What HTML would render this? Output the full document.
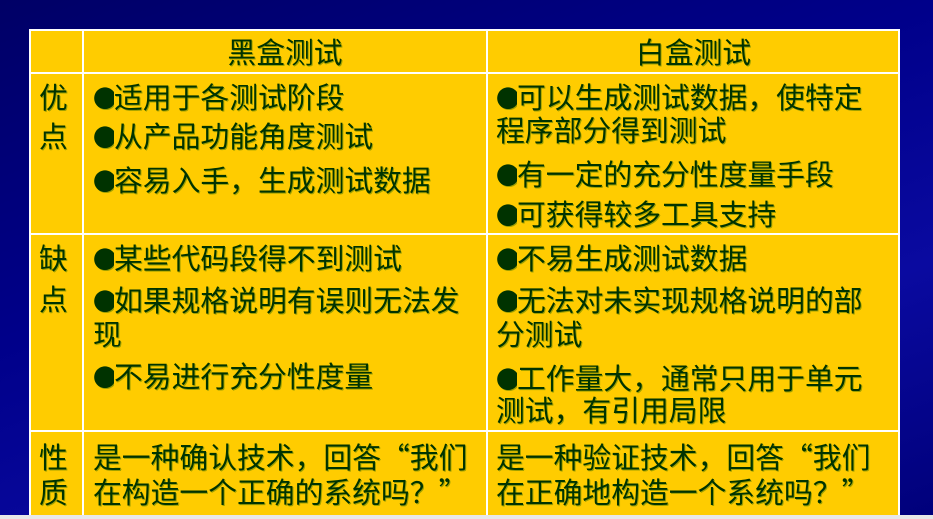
<!DOCTYPE html>
<html><head><meta charset="utf-8"><style>
html,body{margin:0;padding:0}
body{width:933px;height:519px;overflow:hidden;position:relative;
background:linear-gradient(160deg,#000066 0%,#00008a 40%,#0a0aa0 70%,#00007a 100%);
font-family:"Noto Sans CJK SC",sans-serif;}
#bot{position:absolute;left:0;top:515px;width:933px;height:4px;background:#e8e8e8}
#tbl{position:absolute;left:29px;top:29px;width:871px;height:486px;background:#ffcc00;border-top:2px solid #fff;border-left:2px solid #fff;border-right:2px solid #fff;box-sizing:border-box}
.h{position:absolute;background:#fff;height:2px;left:29px;width:871px}
.v{position:absolute;background:#fff;width:2px}
.t{position:absolute;font-size:28.8px;line-height:34px;height:34px;color:#003300;white-space:nowrap;
text-shadow:1px 1px 0 #a0a000}
.c{text-align:center}
.b{display:inline-block;width:21px;font-size:24px;vertical-align:top;overflow:hidden}
</style></head><body>
<div id="tbl"></div>
<div class="h" style="top:72px"></div>
<div class="h" style="top:233px"></div>
<div class="h" style="top:430px"></div>
<div class="v" style="left:82px;top:29px;height:486px"></div>
<div class="v" style="left:486px;top:29px;height:486px"></div>
<div id="bot"></div>

<div class="t c" style="left:84px;width:402px;top:35px">黑盒测试</div>
<div class="t c" style="left:488px;width:411px;top:35px">白盒测试</div>

<div class="t" style="left:39px;top:80px">优</div>
<div class="t" style="left:39px;top:119px">点</div>
<div class="t" style="left:93px;top:80px"><span class="b">●</span>适用于各测试阶段</div>
<div class="t" style="left:93px;top:119px"><span class="b">●</span>从产品功能角度测试</div>
<div class="t" style="left:93px;top:163px"><span class="b">●</span>容易入手，生成测试数据</div>
<div class="t" style="left:496px;top:80px"><span class="b">●</span>可以生成测试数据，使特定</div>
<div class="t" style="left:496px;top:113px">程序部分得到测试</div>
<div class="t" style="left:496px;top:157px"><span class="b">●</span>有一定的充分性度量手段</div>
<div class="t" style="left:496px;top:197px"><span class="b">●</span>可获得较多工具支持</div>

<div class="t" style="left:39px;top:241px">缺</div>
<div class="t" style="left:39px;top:282px">点</div>
<div class="t" style="left:93px;top:241px"><span class="b">●</span>某些代码段得不到测试</div>
<div class="t" style="left:93px;top:283px"><span class="b">●</span>如果规格说明有误则无法发</div>
<div class="t" style="left:93px;top:317px">现</div>
<div class="t" style="left:93px;top:359px"><span class="b">●</span>不易进行充分性度量</div>
<div class="t" style="left:496px;top:241px"><span class="b">●</span>不易生成测试数据</div>
<div class="t" style="left:496px;top:283px"><span class="b">●</span>无法对未实现规格说明的部</div>
<div class="t" style="left:496px;top:317px">分测试</div>
<div class="t" style="left:496px;top:361px"><span class="b">●</span>工作量大，通常只用于单元</div>
<div class="t" style="left:496px;top:393px">测试，有引用局限</div>

<div class="t" style="left:39px;top:440px">性</div>
<div class="t" style="left:39px;top:475px">质</div>
<div class="t" style="left:93px;top:440px">是一种确认技术，回答“我们</div>
<div class="t" style="left:93px;top:475px">在构造一个正确的系统吗？”</div>
<div class="t" style="left:496px;top:440px">是一种验证技术，回答“我们</div>
<div class="t" style="left:496px;top:475px">在正确地构造一个系统吗？”</div>
</body></html>
